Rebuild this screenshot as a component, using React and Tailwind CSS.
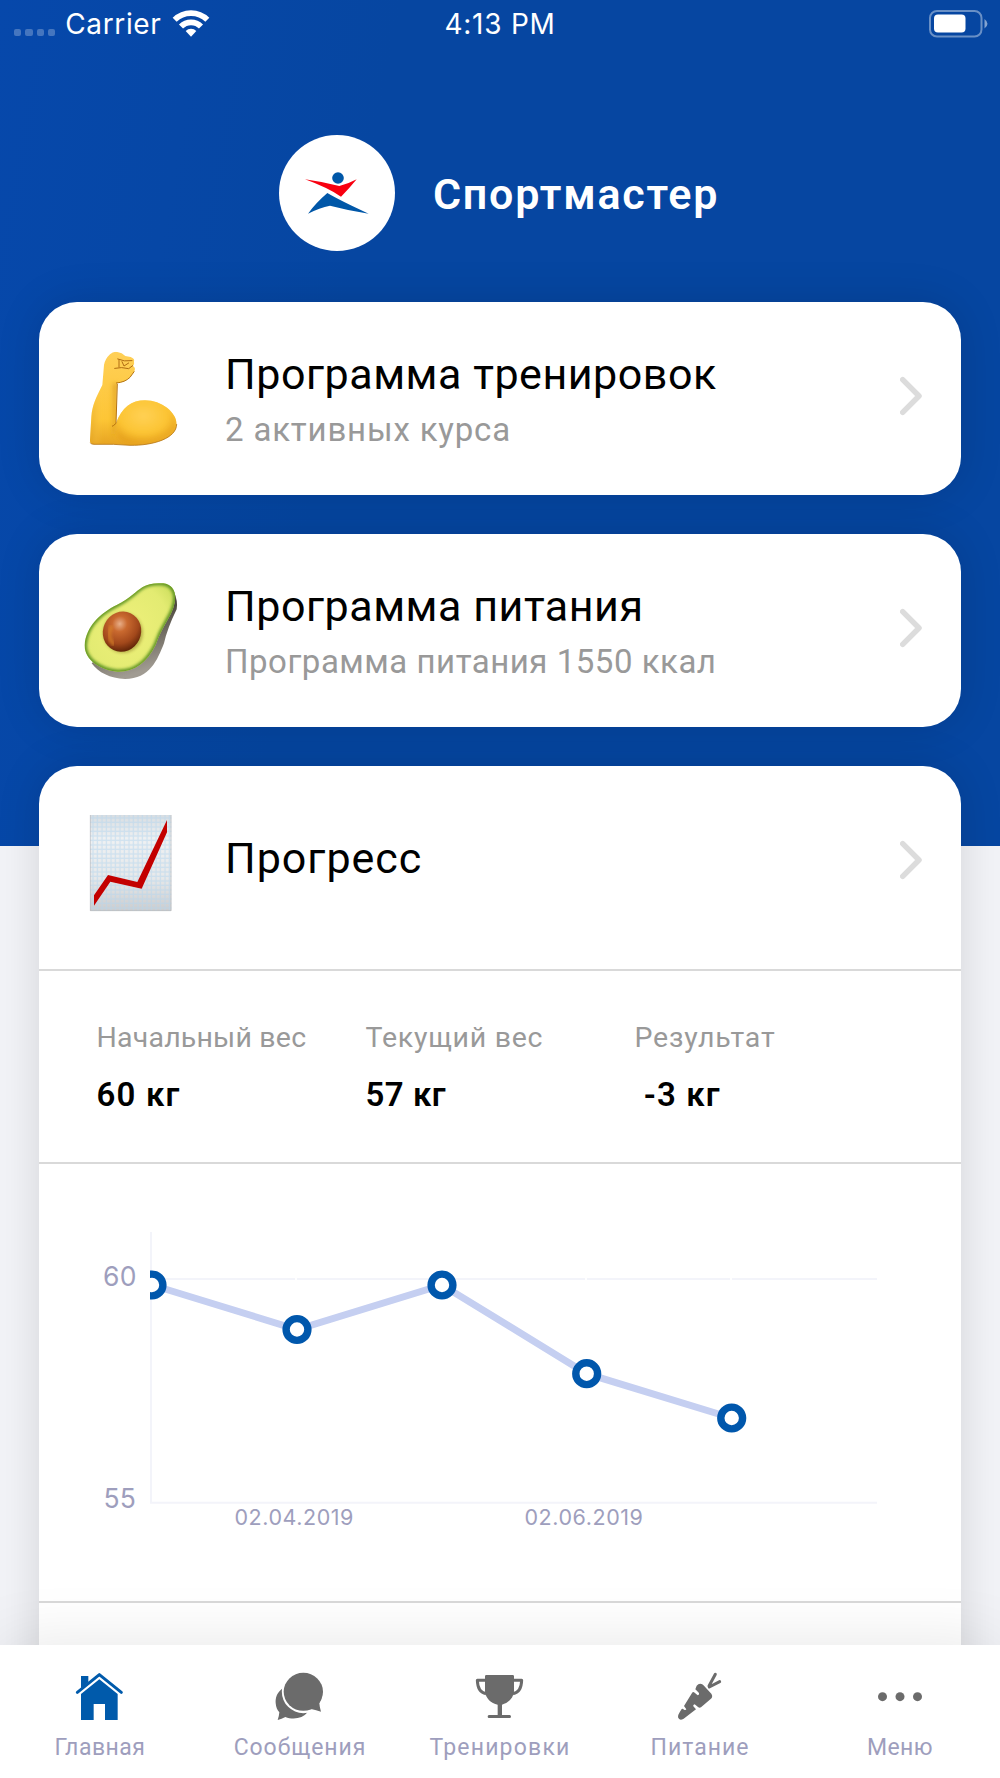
import React from "react";

const tabs = [
  { label: "Главная", icon: HomeIcon, className: "tracking-[0.5px]" },
  { label: "Сообщения", icon: MessagesIcon, className: "tracking-[0.93px]" },
  { label: "Тренировки", icon: TrophyIcon, className: "tracking-[1.2px]" },
  { label: "Питание", icon: CarrotIcon, className: "tracking-[1px]" },
  { label: "Меню", icon: MoreIcon, className: "tracking-[0.4px]" },
];

const points = [
  [113, 121],
  [258, 165.5],
  [403, 121],
  [547.7, 209.7],
  [692.7, 254],
];

function HomeIcon() {
  return (
    <svg className="w-[54px] h-[54px]" viewBox="219 270 162 162" fill="#005aab">
      <path d="M243 288h22v19l-22 18z" />
      <path d="M232 337l66-53 66 53" fill="none" stroke="#005aab" strokeWidth="9" strokeLinecap="round" strokeLinejoin="round" />
      <path d="M243 342l55-44 55 44v78h-38v-48h-34v48h-38z" />
    </svg>
  );
}

function MessagesIcon() {
  return (
    <svg className="w-[54px] h-[54px]" viewBox="818 270 162 162" fill="#6b6b6b">
      <path d="M848 324C830 338 825 352 826 369C827 382 831 390 837 397Q836 410 832 420Q844 417 855 411C878 420 908 416 921 397Z" />
      <circle cx="909" cy="335" r="64.5" fill="#fff" />
      <ellipse cx="909" cy="335.500" rx="59" ry="57" />
      <path d="M964 355L957 370Q958 383 962 395Q948 391 932 387Z" />
    </svg>
  );
}

function TrophyIcon() {
  return (
    <svg className="w-[54px] h-[54px]" viewBox="1419 270 162 162" fill="#6b6b6b">
      <path d="M1459 285h79q4 0 4 4v45c-2 22-19 36-36 40v31h23q4 0 4 4.500t-4 4.500h-62q-4 0-4-4.500t4-4.500h26v-31c-20-4-36-18-38-40v-45q0-4 4-4z" />
      <path d="M1456 301h-24q1 36 26 40M1541 301h24q-1 36-26 40" fill="none" stroke="#6b6b6b" strokeWidth="9" strokeLinejoin="round" />
    </svg>
  );
}

function CarrotIcon() {
  return (
    <svg className="w-[54px] h-[54px]" viewBox="519 270 162 162" fill="#6b6b6b">
      <path d="M534 412Q534 404 539 397L545 387Q548 385 552 389Q557 392 559 388L552 378L576 339Q579 334 584 338L593 346Q599 345 597 339L586 328L590 317Q598 307 609 314L634 341Q640 350 632 357L603 382Q598 385 594 381L584 373Q578 374 580 379L588 388L551 416Q538 424 534 412Z" />
      <path d="M646 283l-19 35M659 305l-31 16" fill="none" stroke="#6b6b6b" strokeWidth="9" strokeLinecap="round" />
    </svg>
  );
}

function MoreIcon() {
  return (
    <svg className="w-[54px] h-[54px]" viewBox="1119 270 162 162" fill="#6b6b6b">
      <circle cx="1147.500" cy="350" r="13.500" />
      <circle cx="1200" cy="350" r="13.500" />
      <circle cx="1252.500" cy="350" r="13.500" />
    </svg>
  );
}

function ArmEmoji() {
  return (
    <svg className="w-[100px] h-[110px]" viewBox="150 156 300 330">
      <defs>
        <linearGradient id="arm" x1="0" y1="0" x2="0" y2="1">
          <stop offset="0" stopColor="#ffd15c" />
          <stop offset="0.700" stopColor="#fdc636" />
          <stop offset="1" stopColor="#e09a1c" />
        </linearGradient>
        <linearGradient id="forearm" x1="0" y1="0" x2="1" y2="0">
          <stop offset="0" stopColor="#e0a020" stopOpacity="0.850" />
          <stop offset="0.400" stopColor="#ffd050" stopOpacity="0" />
          <stop offset="0.750" stopColor="#f0b52c" stopOpacity="0" />
          <stop offset="1" stopColor="#c98410" stopOpacity="0.900" />
        </linearGradient>
        <radialGradient id="biceps" cx="0.450" cy="0.350" r="0.620">
          <stop offset="0" stopColor="#ffd155" />
          <stop offset="0.650" stopColor="#fcc433" />
          <stop offset="1" stopColor="#e6a11d" />
        </radialGradient>
        <filter id="blend" x="-0.200" y="-0.200" width="1.400" height="1.400">
          <feGaussianBlur stdDeviation="6" />
        </filter>
        <clipPath id="armShape">
          <path d="M262 186Q250 183 240 193Q225 207 222 225L217 285C197 325 187 345 184 380L180 450Q179 463 192 463L250 463L300 466C370 467 440 445 440 402C440 368 395 331 345 331C305 331 275 352 258 400L261 279Q285 277 300 262L313 244Q318 233 309 228Q314 221 312 214Q315 206 302 201L286 198Q276 188 262 186Z" />
        </clipPath>
      </defs>
      <g clipPath="url(#armShape)">
        <path d="M150 156h300v330h-300z" fill="url(#arm)" />
        <path d="M217 280C197 325 187 345 184 380L180 450Q179 463 192 463L225 463Q262 440 258 400L261 279Z" fill="url(#forearm)" filter="url(#blend)" />
        <path d="M262 400C275 352 305 331 345 331C395 331 440 368 440 402C440 440 370 463 300 463C265 455 252 430 262 400Z" fill="url(#biceps)" filter="url(#blend)" />
      </g>
      <path d="M181 458Q182 463 192 463L250 463L300 466C370 467 440 445 440 402" fill="none" stroke="#b87818" strokeWidth="2.500" />
      <path d="M262 281L258 400Q250 408 246 409M258 279Q285 277 300 262L313 244" fill="none" stroke="#b5730f" strokeWidth="3" />
      <path d="M263 207Q282 216 306 212M267 209v22M254 235Q275 230 296 236L308 227M276 215l6 13 14-9" fill="none" stroke="#b06c12" strokeWidth="3" strokeLinecap="round" />
    </svg>
  );
}

function AvocadoEmoji() {
  return (
    <svg className="w-[100px] h-[110px]" viewBox="150 162 300 330">
      <defs>
        <linearGradient id="skin" x1="0" y1="0" x2="0.300" y2="1">
          <stop offset="0.400" stopColor="#4c473d" />
          <stop offset="1" stopColor="#a09b92" />
        </linearGradient>
        <radialGradient id="flesh" cx="0.480" cy="0.500" r="0.600">
          <stop offset="0" stopColor="#eef07a" />
          <stop offset="0.700" stopColor="#e3eb72" />
          <stop offset="1" stopColor="#c9dc5a" />
        </radialGradient>
        <radialGradient id="seed" cx="0.360" cy="0.350" r="0.700">
          <stop offset="0" stopColor="#e8ae88" />
          <stop offset="0.280" stopColor="#c9692f" />
          <stop offset="0.700" stopColor="#a2481b" />
          <stop offset="1" stopColor="#612408" />
        </radialGradient>
        <filter id="soft">
          <feGaussianBlur stdDeviation="5" />
        </filter>
        <clipPath id="half">
          <path d="M338 201Q360 187 400 190Q434 195 436 232Q436 262 411 303C395 330 388 345 377 375C350 430 310 457 262 455C210 450 163 420 164 375C168 320 210 280 260 255C300 235 318 213 338 201Z" />
        </clipPath>
      </defs>
      <path d="M430 210Q445 245 440 268Q412 325 402 370C382 420 360 477 285 477C240 475 205 458 185 430Z" fill="url(#skin)" />
      <g clipPath="url(#half)">
        <path d="M150 162h300v330h-300z" fill="url(#flesh)" />
        <path
          d="M338 201Q360 187 400 190Q434 195 436 232Q436 262 411 303C395 330 388 345 377 375C350 430 310 457 262 455C210 450 163 420 164 375C168 320 210 280 260 255C300 235 318 213 338 201Z"
          fill="none"
          stroke="#5e9420"
          strokeWidth="13"
          filter="url(#soft)"
        />
      </g>
      <ellipse cx="279" cy="338" rx="60" ry="61" fill="#8b7a20" opacity="0.500" filter="url(#soft)" />
      <ellipse cx="276" cy="335" rx="57" ry="61" transform="rotate(25 276 335)" fill="url(#seed)" />
      <path d="M250 372Q230 350 243 322" fill="none" stroke="#df8a2c" strokeWidth="12" strokeLinecap="round" opacity="0.600" filter="url(#soft)" />
    </svg>
  );
}

function ChartEmoji() {
  return (
    <svg className="w-[100px] h-[110px]" viewBox="150 168 300 330">
      <defs>
        <linearGradient id="paper" x1="0" y1="0" x2="0" y2="1">
          <stop offset="0" stopColor="#d9dde1" />
          <stop offset="0.250" stopColor="#f0f1f2" />
          <stop offset="0.650" stopColor="#e8e9ea" />
          <stop offset="1" stopColor="#cccccd" />
        </linearGradient>
        <pattern id="grid" x="180" y="195" width="13.500" height="13.500" patternUnits="userSpaceOnUse">
          <path d="M0 9h13.500M9 0v13.500" stroke="#b5d6ee" strokeWidth="4" />
        </pattern>
      </defs>
      <path d="M180 195h244v288h-244z" fill="url(#paper)" />
      <path d="M180 195h244v288h-244z" fill="url(#grid)" opacity="0.550" />
      <path d="M181 195v287h242v-287" fill="none" stroke="#b9bcc0" strokeWidth="3" opacity="0.700" />
      <path d="M192 436L234 375L322 396L411 210V247L335 416L241 395L192 467Z" fill="#c30000" />
    </svg>
  );
}

const Chevron = () => (
  <svg className="w-[22px] h-[40px] mt-[74px] mr-[39px]" viewBox="0 0 22 40">
    <path d="M2.700 3.600L19 20L2.700 36.400" fill="none" stroke="#dcdcdc" strokeWidth="5.500" strokeLinecap="round" strokeLinejoin="round" />
  </svg>
);

const StatusBar = () => (
  <div className="grid grid-cols-3 h-12 text-white font-['Inter',sans-serif] text-[28px] leading-[48px]">
    <div className="flex pl-[14px]">
      <div className="flex gap-1 pt-[29px] pr-[10px] opacity-25">
        <span className="w-[7.3px] h-[7.3px] rounded-xs bg-white" />
        <span className="w-[7.3px] h-[7.3px] rounded-xs bg-white" />
        <span className="w-[7.3px] h-[7.3px] rounded-xs bg-white" />
        <span className="w-[7.3px] h-[7.3px] rounded-xs bg-white" />
      </div>
      <span className="w-[107px] tracking-[0.65px]">Carrier</span>
      <svg className="w-[38px] h-[27px] mt-[10px]" viewBox="516 30 114 81" fill="none" stroke="#fff" strokeWidth="17">
        <path d="M524 59.500a69.500 69.500 0 0 1 98 0" />
        <path d="M543 79.500a42 42 0 0 1 60 0" />
        <path d="M557 93a22 22 0 0 1 32 0l-16 17z" fill="#fff" stroke="none" />
      </svg>
    </div>
    <div className="text-center tracking-[0.75px]">4:13 PM</div>
    <div className="flex justify-end pr-3">
      <svg className="w-[60px] h-[28px] mt-[10px]" viewBox="0 0 60 28">
        <rect x="2" y="1" width="51.500" height="25.500" rx="7" fill="none" stroke="#fff" strokeOpacity="0.400" strokeWidth="2" />
        <rect x="6" y="4.500" width="31.500" height="18" rx="4" fill="#fff" />
        <path d="M56.500 9q6 4.700 0 9.500z" fill="#fff" fillOpacity="0.500" />
      </svg>
    </div>
  </div>
);

const Brand = () => (
  <div className="flex items-center mt-[87px] pl-[278.5px] gap-[38.5px]">
    <div className="w-[116px] h-[116px] rounded-full bg-white">
      <svg className="w-full h-full" viewBox="56 45 348 348">
        <circle cx="233" cy="174" r="17.500" fill="#0057a8" />
        <path d="M134 178Q190 186 237 198Q263 192 289 178Q269 203 242 230Q200 202 134 178Z" fill="#f80010" />
        <path d="M201 219Q240 242 325 281Q270 273 209 257Q178 263 143 281Q165 250 201 219Z" fill="#0057a8" />
      </svg>
    </div>
    <h1 className="pt-[2px] text-white text-[43px] font-semibold leading-[52px] tracking-[1.75px]">Спортмастер</h1>
  </div>
);

const LinkCard = ({ icon, title, subtitle, subtitleClass }) => (
  <div className="flex h-[193px] rounded-[38px] bg-white shadow-[0_0_44px_rgba(0,0,0,0.13)]">
    <div className="w-[186px] pl-[41px] pt-10">{icon}</div>
    <div className="flex-1 pt-[46px]">
      <h2 className="text-[43px] leading-[52px] text-black tracking-[0.54px]">{title}</h2>
      <p className={`mt-2 text-[33px] leading-[44px] text-[#999] ${subtitleClass}`}>{subtitle}</p>
    </div>
    <Chevron />
  </div>
);

const Stat = ({ label, value, labelClass, valueClass }) => (
  <div>
    <div className={`text-[28.5px] leading-10 text-[#999] ${labelClass}`}>{label}</div>
    <div className={`mt-[15px] text-[33px] leading-[44px] font-semibold text-black whitespace-pre ${valueClass}`}>{value}</div>
  </div>
);

const WeightChart = () => (
  <svg className="block w-[922px] h-[437px]" viewBox="0 0 922 437">
    <defs>
      <clipPath id="plot">
        <path d="M111 0h811v437h-811z" />
      </clipPath>
    </defs>
    <path d="M112 68v271M111 338.700h727M111 115h145M258 115h288M548 115h143M693 115h145" fill="none" stroke="#f3f4fa" strokeWidth="2" />
    <g clipPath="url(#plot)">
      <polyline points={points.map((p) => p.join(",")).join(" ")} fill="none" stroke="#c5cff1" strokeWidth="7" />
      {points.map(([x, y]) => (
        <circle key={x} cx={x} cy={y} r="10.900" fill="#fff" stroke="#0057ac" strokeWidth="7.400" />
      ))}
    </g>
    <g className="font-['Inter',sans-serif]" fill="#9e9ebd">
      <text className="text-[26.5px] tracking-[0.2px]" x="64" y="122">60</text>
      <text className="text-[26.5px] tracking-[0.2px]" x="64.5" y="343.500">55</text>
      <text className="text-[21.5px] tracking-[0.55px]" x="195.500" y="361">02.04.2019</text>
      <text className="text-[21.5px] tracking-[0.55px]" x="485.500" y="361">02.06.2019</text>
    </g>
  </svg>
);

const ProgressCard = () => (
  <div className="h-[1000px] rounded-t-[38px] bg-white shadow-[0_0_44px_rgba(0,0,0,0.13)]">
    <div className="flex h-[205px] border-b-2 border-[#d9d9d9]">
      <div className="w-[186px] pl-[41px] pt-10">
        <ChartEmoji />
      </div>
      <h2 className="flex-1 pt-[66px] text-[43px] leading-[52px] text-black tracking-[1px]">Прогресс</h2>
      <Chevron />
    </div>
    <div className="grid grid-cols-[269px_269px_269px] h-[193px] pl-[57.5px] pt-[46.5px] border-b-2 border-[#d9d9d9]">
      <Stat label="Начальный вес" value="60 кг" labelClass="tracking-[0.2px]" valueClass="tracking-[1.2px]" />
      <Stat label="Текущий вес" value="57 кг" labelClass="tracking-[0.75px]" valueClass="tracking-[0.5px]" />
      <Stat label="Результат" value=" -3 кг" labelClass="tracking-[0.8px]" valueClass="tracking-[1.1px]" />
    </div>
    <div className="border-b-2 border-[#d9d9d9]">
      <WeightChart />
    </div>
  </div>
);

const TabBar = () => (
  <nav className="relative z-10 grid grid-cols-5 h-[133px] pt-[25px] bg-white shadow-[0_0_66px_rgba(0,0,0,0.1)]">
    {tabs.map(({ label, icon: Icon, className }) => (
      <div key={label} className="flex flex-col items-center">
        <Icon />
        <span className={`mt-[8.5px] text-[23px] leading-[30px] text-[#9e9ebd] ${className}`}>{label}</span>
      </div>
    ))}
  </nav>
);

export default function App() {
  return (
    <div className="w-[1000px] h-[1778px] overflow-hidden bg-[#f2f3f7] font-['Roboto',sans-serif]">
      <div className="h-[1645px] overflow-hidden bg-[linear-gradient(100deg,#0648ab_0%,#0646a1_35%,#0646a1_100%)] bg-[length:100%_846px] bg-no-repeat">
        <StatusBar />
        <Brand />
        <div className="flex flex-col gap-[39px] mt-[51px] px-[39px]">
          <LinkCard
            icon={<ArmEmoji />}
            title="Программа тренировок"
            subtitle="2 активных курса"
            subtitleClass="tracking-[0.83px]"
          />
          <LinkCard
            icon={<AvocadoEmoji />}
            title="Программа питания"
            subtitle="Программа питания 1550 ккал"
            subtitleClass="tracking-[0.52px]"
          />
          <ProgressCard />
        </div>
      </div>
      <TabBar />
    </div>
  );
}
